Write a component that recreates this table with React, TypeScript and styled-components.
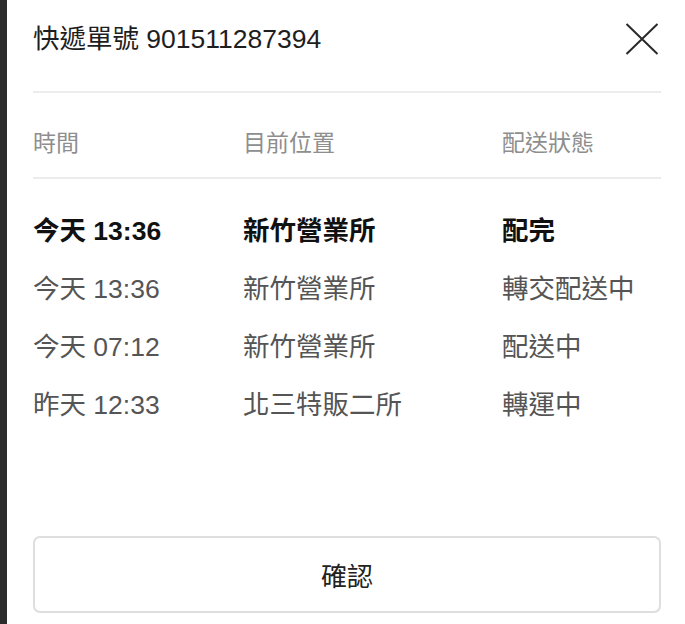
import React from "react";
import styled, { createGlobalStyle } from "styled-components";

const Global = createGlobalStyle`
  html, body { margin: 0; padding: 0; background: #ffffff; }
  body { font-family: "Liberation Sans", "Noto Sans CJK TC", sans-serif; }
`;

const Page = styled.div`
  display: flex;
  width: 685px;
  height: 624px;
  overflow: hidden;
`;

const Backdrop = styled.div`
  width: 7px;
  flex: none;
  background: #2c2c2c;
`;

const Panel = styled.div`
  flex: 1;
  display: flex;
  flex-direction: column;
  padding: 0 24px 0 26px;
  background: #ffffff;
`;

const Header = styled.div`
  display: flex;
  align-items: center;
  justify-content: space-between;
  height: 78px;
  border-bottom: 2px solid #ececec;
  padding-bottom: 13px;
  box-sizing: content-box;
`;

const Title = styled.h1`
  margin: 0;
  font-size: 26.5px;
  font-weight: 400;
  color: #1e1e1e;
  line-height: 1;
  font-family: "Liberation Sans", "Noto Sans CJK TC", sans-serif;
`;

const CloseButton = styled.button`
  width: 34px;
  height: 34px;
  padding: 0;
  margin-right: 2px;
  border: none;
  background: none;
  display: flex;
  align-items: center;
  justify-content: center;
  cursor: pointer;
`;

const Grid = styled.div`
  display: grid;
  grid-template-columns: 210px 259px 1fr;
  align-items: center;
  font-family: "Liberation Sans", "Noto Sans CJK TC", sans-serif;
`;

const HeadRow = styled(Grid)`
  padding: 35px 0 19px;
  border-bottom: 2px solid #ececec;
  font-size: 23px;
  line-height: 30px;
  color: #8e8e8e;
`;

const Rows = styled.div`
  display: flex;
  flex-direction: column;
  padding-top: 23px;
`;

const Row = styled(Grid)<{ $current?: boolean }>`
  height: 58px;
  font-size: 26.5px;
  line-height: 58px;
  font-weight: ${(p) => (p.$current ? 700 : 400)};
  color: ${(p) => (p.$current ? "#111111" : "#555555")};
`;

const Cell = styled.span`
  white-space: nowrap;
`;

const Footer = styled.div`
  margin-top: auto;
  padding-bottom: 11px;
`;

const ConfirmButton = styled.button`
  width: 100%;
  height: 77px;
  box-sizing: border-box;
  border: 2px solid #dedede;
  border-radius: 7px;
  background: #ffffff;
  font-family: "Liberation Sans", "Noto Sans CJK TC", sans-serif;
  font-size: 26px;
  color: #222222;
  cursor: pointer;
`;

const data = [
  { time: "今天 13:36", place: "新竹營業所", status: "配完", current: true },
  { time: "今天 13:36", place: "新竹營業所", status: "轉交配送中" },
  { time: "今天 07:12", place: "新竹營業所", status: "配送中" },
  { time: "昨天 12:33", place: "北三特販二所", status: "轉運中" },
];

export default function App() {
  return (
    <Page>
      <Global />
      <Backdrop />
      <Panel>
        <Header>
          <Title>快遞單號 901511287394</Title>
          <CloseButton aria-label="close">
            <svg width="34" height="34" viewBox="0 0 34 34">
              <path d="M1.5 2 L32.5 32 M32.5 2 L1.5 32" stroke="#2a2a2a" strokeWidth="2" fill="none" />
            </svg>
          </CloseButton>
        </Header>
        <HeadRow>
          <Cell>時間</Cell>
          <Cell>目前位置</Cell>
          <Cell>配送狀態</Cell>
        </HeadRow>
        <Rows>
          {data.map((d, i) => (
            <Row key={i} $current={d.current}>
              <Cell>{d.time}</Cell>
              <Cell>{d.place}</Cell>
              <Cell>{d.status}</Cell>
            </Row>
          ))}
        </Rows>
        <Footer>
          <ConfirmButton>確認</ConfirmButton>
        </Footer>
      </Panel>
    </Page>
  );
}
